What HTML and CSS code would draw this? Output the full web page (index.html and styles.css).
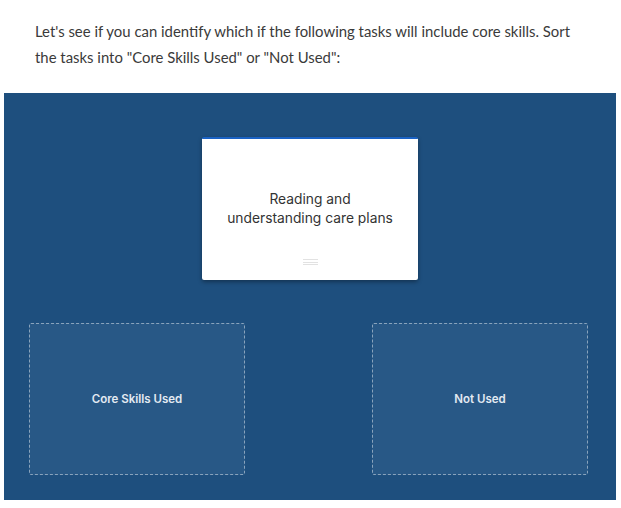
FILE: index.html
```html
<!DOCTYPE html>
<html>
<head>
<meta charset="utf-8">
<link rel="stylesheet" href="styles.css">
</head>
<body>
<p class="intro">Let's see if you can identify which if the following tasks will include core skills. Sort the tasks into "Core Skills Used" or "Not Used":</p>
<div class="board">
  <div class="deck">
    <div class="card">
      <div class="card-text">Reading and<br>understanding care plans</div>
      <div class="handle"><span></span><span></span><span></span></div>
    </div>
  </div>
  <div class="zones">
    <div class="zone">Core Skills Used</div>
    <div class="zone">Not Used</div>
  </div>
</div>
</body>
</html>
```
FILE: styles.css
```css
html, body {
  margin: 0;
  padding: 0;
  background: #ffffff;
}
body {
  width: 621px;
  height: 508px;
  overflow: hidden;
}
.intro {
  margin: 0;
  padding: 18px 0 0 35px;
  width: 595px;
  height: 93px;
  box-sizing: border-box;
  font-family: "Lato", "Noto Sans", sans-serif;
  font-size: 14.9px;
  line-height: 26px;
  color: #3a3a3a;
}
.board {
  margin-left: 4px;
  width: 612px;
  height: 407px;
  background: #1e4f7e;
  box-sizing: border-box;
  padding: 44px 28px 25px 25px;
  display: flex;
  flex-direction: column;
}
.deck {
  display: flex;
  justify-content: center;
  height: 186px;
}
.card {
  width: 216px;
  height: 143px;
  box-sizing: border-box;
  background: #ffffff;
  border-top: 2px solid #1a62c4;
  border-radius: 2px;
  box-shadow: 0 2px 4px rgba(0, 0, 0, 0.35);
  display: flex;
  flex-direction: column;
  align-items: center;
  margin-left: 3px;
}
.card-text {
  margin-top: 51px;
  font-family: "Inter", "Noto Sans", sans-serif;
  font-size: 13.8px;
  line-height: 19px;
  color: #333333;
  text-align: center;
}
.handle {
  margin-top: 31px;
  display: flex;
  flex-direction: column;
  gap: 1.5px;
}
.handle span {
  display: block;
  width: 15px;
  height: 1px;
  background: #e2e2e2;
}
.zones {
  display: flex;
  justify-content: space-between;
}
.zone {
  width: 216px;
  height: 152px;
  box-sizing: border-box;
  border: 1px dashed rgba(255, 255, 255, 0.45);
  border-radius: 2px;
  background: #285886;
  display: flex;
  align-items: center;
  justify-content: center;
  font-family: "Inter", "Noto Sans", sans-serif;
  font-weight: 600;
  font-size: 11.5px;
  color: #e3eaf2;
}
```
